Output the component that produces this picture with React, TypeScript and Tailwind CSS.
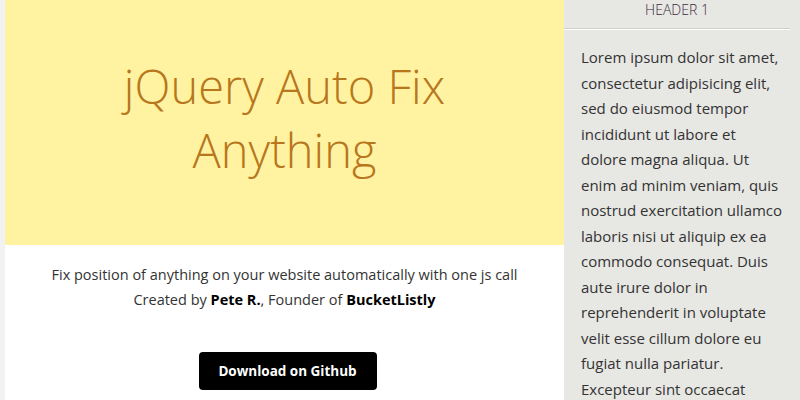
import React from "react";

export default function App() {
  return (
    <div
      className="flex h-[400px] w-[800px] overflow-hidden bg-white"
      style={{ fontFamily: '"Open Sans", "Liberation Sans", sans-serif' }}
    >
      <div className="w-[5px] shrink-0 bg-[#f2f2f2]" />
      <main className="flex flex-1 flex-col">
        <section className="h-[245px] shrink-0 bg-[#fff3a1] pt-[54px] text-center">
          <h1 className="text-[47px] font-light leading-[64px] text-[#b8761d]">
            jQuery Auto Fix
            <br />
            Anything
          </h1>
        </section>
        <section className="pt-[17px] text-center text-[14.5px] leading-[25px] text-[#333]">
          <p>Fix position of anything on your website automatically with one js call</p>
          <p>
            Created by <b className="font-bold text-black">Pete R.</b>, Founder of{" "}
            <b className="font-bold text-black">BucketListly</b>
          </p>
          <div className="mt-[40px] flex justify-center pl-[6px]">
            <a className="flex h-[38px] w-[178px] items-center justify-center rounded-[4px] bg-black text-[13.5px] font-bold text-white">
              Download on Github
            </a>
          </div>
        </section>
      </main>
      <aside className="w-[236px] shrink-0 bg-[#e7e7e3]">
        <div className="mr-[10px] h-[29px] border-b border-[#cfcfcb] text-center text-[14px] font-light leading-[20px] text-[#3a2a40] shadow-[0_1px_0_#ffffff]">
          HEADER 1
        </div>
        <p className="px-[17px] pt-[16px] text-[15px] leading-[25.5px] text-[#333]">
          Lorem ipsum dolor sit amet, consectetur adipisicing elit, sed do eiusmod tempor
          incididunt ut labore et dolore magna aliqua. Ut enim ad minim veniam, quis nostrud
          exercitation ullamco laboris nisi ut aliquip ex ea commodo consequat. Duis aute irure
          dolor in reprehenderit in voluptate velit esse cillum dolore eu fugiat nulla pariatur.
          Excepteur sint occaecat cupidatat non proident, sunt in culpa qui officia deserunt
          mollit anim id est laborum.
        </p>
      </aside>
    </div>
  );
}
